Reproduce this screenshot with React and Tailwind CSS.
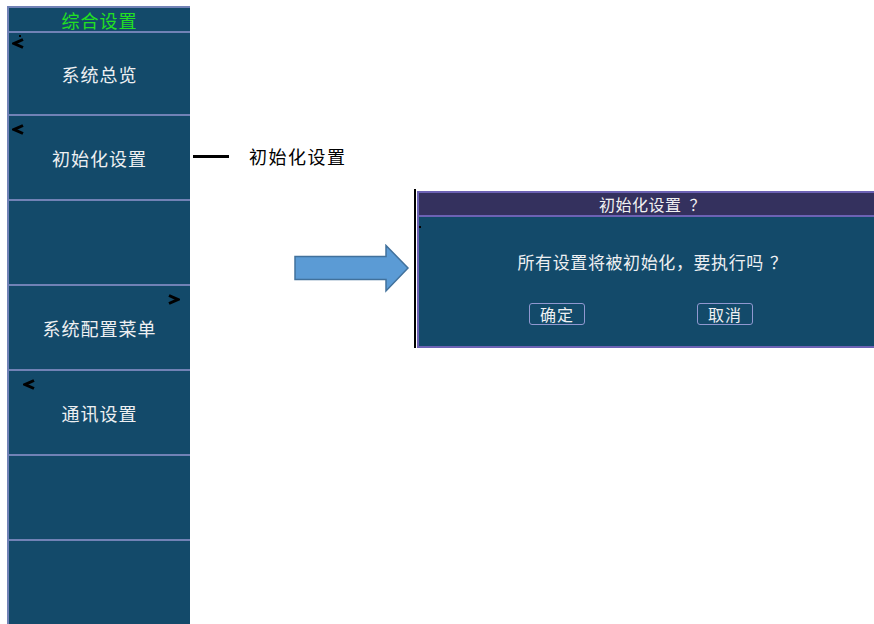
import React from "react";

function ChevLeft() {
  return (
    <svg width="12" height="11" viewBox="0 0 12 11" className="block">
      <polyline points="11,1.5 2.2,5.5 11,9.5" fill="none" stroke="#000" strokeWidth="3" strokeLinejoin="miter" />
    </svg>
  );
}
function ChevRight() {
  return (
    <svg width="12" height="11" viewBox="0 0 12 11" className="block">
      <polyline points="1,1.5 9.8,5.5 1,9.5" fill="none" stroke="#000" strokeWidth="3" strokeLinejoin="miter" />
    </svg>
  );
}

function Section({ label, h = "h-[85px]", children }) {
  return (
    <div className={`relative ${h} border-t-2 border-[#7182b6] flex items-center justify-center`}>
      {children}
      {label && (
        <span className="text-[18px] tracking-[1px] text-[#eef0f2] leading-none">{label}</span>
      )}
    </div>
  );
}

export default function App() {
  return (
    <div className="flex w-[874px] h-[624px] bg-white overflow-hidden font-['Noto_Sans_CJK_SC',sans-serif]">
      {/* Left menu panel */}
      <div className="ml-[7px] mt-[6px] w-[183px] shrink-0 flex flex-col bg-[#134a6a] border-l-2 border-[#7182b6]">
        <div className="h-[25px] border-t-2 border-[#7182b6] flex items-center justify-center">
          <span className="text-[18px] tracking-[1px] text-[#22e022] leading-none">综合设置</span>
        </div>
        <Section label="系统总览" h="h-[83px]">
          <div className="absolute left-[3px] top-[2px]">
            <div className="ml-[7px] w-[2px] h-[2px] bg-black"></div>
            <div className="mt-[1px]"><ChevLeft /></div>
          </div>
        </Section>
        <Section label="初始化设置">
          <div className="absolute left-[3px] top-[8px]"><ChevLeft /></div>
        </Section>
        <Section label="" />
        <Section label="系统配置菜单">
          <div className="absolute right-[10px] top-[8px]"><ChevRight /></div>
        </Section>
        <Section label="通讯设置">
          <div className="absolute left-[14px] top-[8px]"><ChevLeft /></div>
        </Section>
        <Section label="" />
        <Section label="" h="h-[85px]" />
      </div>

      {/* Right area */}
      <div className="flex flex-col">
        <div className="mt-[145px] h-[22px] flex items-center">
          <div className="ml-[3px] w-[36px] h-[3px] bg-black"></div>
          <span className="ml-[20px] text-[18px] tracking-[1.5px] text-black leading-none">初始化设置</span>
        </div>

        <div className="mt-[22px] flex items-start">
          <svg width="116" height="49" viewBox="0 0 116 49" className="ml-[104px] mt-[55px] block shrink-0">
            <polygon
              points="1,12.5 92,12.5 92,1.5 114,24 92,47 92,35.5 1,35.5"
              fill="#5b9bd5"
              stroke="#41719c"
              strokeWidth="1.5"
            />
          </svg>

          <div className="ml-[4px] w-[472px] shrink-0 border-l-2 border-black pt-[2px]">
            <div className="border-2 border-[#6c62b4] border-r-0 ml-[1px]">
              <div className="h-[24px] bg-[#34315e] border-b-2 border-[#6c62b4] flex items-center justify-center">
                <span className="text-[16px] tracking-[0.5px] text-[#f2f2f2] leading-none">
                  初始化设置<span className="ml-[8px]">？</span>
                </span>
              </div>
              <div className="h-[129px] bg-[#134a6a] flex flex-col">
                <div className="mt-[9px] w-[2px] h-[2px] bg-black"></div>
                <div className="mt-[23px] flex justify-center">
                  <span className="text-[17px] tracking-[0.6px] text-[#eef0f2] leading-[22px]">
                    所有设置将被初始化，要执行吗<span className="ml-[6px]">？</span>
                  </span>
                </div>
                <div className="mt-[30px] flex">
                  <div className="ml-[110px] w-[56px] h-[22px] border border-[#9098d0] rounded-[3px] flex items-center justify-center">
                    <span className="text-[16px] tracking-[1px] text-[#eef0f2] leading-none">确定</span>
                  </div>
                  <div className="ml-[112px] w-[56px] h-[22px] border border-[#9098d0] rounded-[3px] flex items-center justify-center">
                    <span className="text-[16px] tracking-[1px] text-[#eef0f2] leading-none">取消</span>
                  </div>
                </div>
              </div>
            </div>
          </div>
        </div>
      </div>
    </div>
  );
}
